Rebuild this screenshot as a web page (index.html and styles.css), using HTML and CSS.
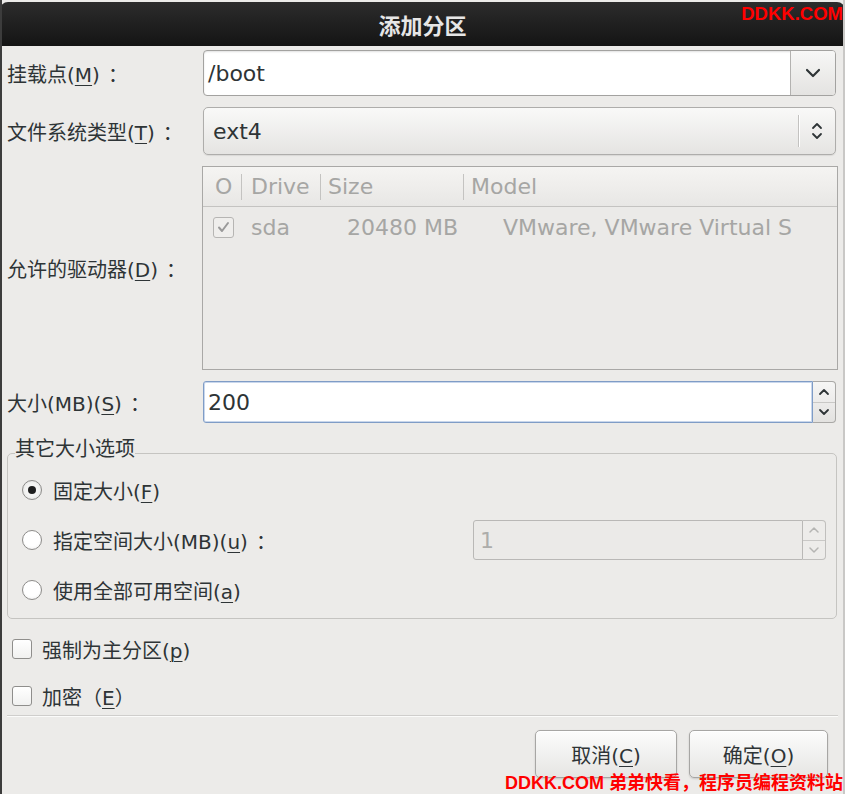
FILE: index.html
```html
<!DOCTYPE html>
<html lang="zh-CN">
<head>
<meta charset="utf-8">
<title>添加分区</title>
<link rel="stylesheet" href="styles.css">
</head>
<body>
<div class="dialog">
  <div class="titlebar">添加分区</div>
  <div class="content">
    <div class="form">
      <label class="lbl">挂载点(<u>M</u>)<span class="colon">：</span></label>
      <div class="combo-entry">
        <div class="ce-text">/boot</div>
        <div class="ce-btn">
          <svg width="16" height="10" viewBox="0 0 16 10"><path d="M2 2 L8 8 L14 2" fill="none" stroke="#2e3436" stroke-width="2.2" stroke-linecap="round" stroke-linejoin="round"/></svg>
        </div>
      </div>

      <label class="lbl">文件系统类型(<u>T</u>)<span class="colon">：</span></label>
      <div class="combo">
        <div class="combo-text">ext4</div>
        <div class="combo-sep"></div>
        <div class="combo-arrows">
          <svg width="12" height="22" viewBox="0 0 12 22"><path d="M2 8 L6 4 L10 8 M2 14 L6 18 L10 14" fill="none" stroke="#2e3436" stroke-width="1.8" stroke-linecap="round" stroke-linejoin="round"/></svg>
        </div>
      </div>

      <label class="lbl">允许的驱动器(<u>D</u>)<span class="colon">：</span></label>
      <div class="table">
        <div class="thead">
          <div class="th c0">O</div>
          <div class="th c1">Drive</div>
          <div class="th c2">Size</div>
          <div class="th c3">Model</div>
        </div>
        <div class="trow">
          <div class="td c0">
            <span class="tcheck"><svg width="15" height="15" viewBox="0 0 15 15"><path d="M3 7.5 L6 11 L12 3" fill="none" stroke="#9a9a9a" stroke-width="2" stroke-linecap="round" stroke-linejoin="round"/></svg></span>
          </div>
          <div class="td c1">sda</div>
          <div class="td c2">20480 MB</div>
          <div class="td c3">VMware, VMware Virtual S</div>
        </div>
      </div>

      <label class="lbl">大小(MB)(<u>S</u>)<span class="colon">：</span></label>
      <div class="spin focus">
        <div class="spin-entry">200</div>
        <div class="spin-btns">
          <div class="sb up"><svg width="12" height="8" viewBox="0 0 12 8"><path d="M2 6 L6 2 L10 6" fill="none" stroke="#2e3436" stroke-width="1.8" stroke-linecap="round" stroke-linejoin="round"/></svg></div>
          <div class="sb down"><svg width="12" height="8" viewBox="0 0 12 8"><path d="M2 2 L6 6 L10 2" fill="none" stroke="#2e3436" stroke-width="1.8" stroke-linecap="round" stroke-linejoin="round"/></svg></div>
        </div>
      </div>
    </div>

    <fieldset class="frame">
      <legend>其它大小选项</legend>
      <div class="opt first">
        <span class="radio checked"><span class="dot"></span></span>
        <span class="opt-text">固定大小(<u>F</u>)</span>
      </div>
      <div class="opt">
        <span class="radio"></span>
        <span class="opt-text">指定空间大小(MB)(<u>u</u>)<span class="colon">：</span></span>
        <div class="spin disabled">
          <div class="spin-entry">1</div>
          <div class="spin-btns">
            <div class="sb up"><svg width="12" height="8" viewBox="0 0 12 8"><path d="M2 6 L6 2 L10 6" fill="none" stroke="#b5b5b3" stroke-width="1.5" stroke-linecap="round" stroke-linejoin="round"/></svg></div>
            <div class="sb down"><svg width="12" height="8" viewBox="0 0 12 8"><path d="M2 2 L6 6 L10 2" fill="none" stroke="#b5b5b3" stroke-width="1.5" stroke-linecap="round" stroke-linejoin="round"/></svg></div>
          </div>
        </div>
      </div>
      <div class="opt">
        <span class="radio"></span>
        <span class="opt-text">使用全部可用空间(<u>a</u>)</span>
      </div>
    </fieldset>

    <div class="check-row first">
      <span class="cbox"></span>
      <span class="opt-text">强制为主分区(<u>p</u>)</span>
    </div>
    <div class="check-row">
      <span class="cbox"></span>
      <span class="opt-text">加密（<u>E</u>）</span>
    </div>

    <div class="separator"></div>

    <div class="buttons">
      <button class="btn cancel">取消(<u>C</u>)</button>
      <button class="btn ok">确定(<u>O</u>)</button>
    </div>
  </div>

  <div class="wm wm-top">DDKK.COM</div>
  <div class="wm wm-bottom">DDKK.COM 弟弟快看，程序员编程资料站</div>
</div>
</body>
</html>
```

FILE: styles.css
```css
* { box-sizing: border-box; }

html, body {
  margin: 0;
  padding: 0;
  background: #ecebe9;
}

body {
  font-family: "DejaVu Sans", "Noto Sans CJK SC", sans-serif;
  color: #2e3436;
  font-size: 20px;
}

.dialog {
  position: relative;
  width: 845px;
  height: 794px;
  background: #ecebe9;
  border-left: 2px solid #3c3c3c;
  border-right: 2px solid #c9c8c6;
  overflow: hidden;
}

.titlebar {
  height: 44px;
  margin-top: 2px;
  margin-left: -2px;
  margin-right: -2px;
  border-radius: 8px 8px 0 0;
  background: linear-gradient(#2c2c2c, #141414);
  color: #e6e6e6;
  font-weight: bold;
  font-size: 22px;
  display: flex;
  align-items: center;
  justify-content: center;
}

.content {
  padding: 4px 7px 0 5px;
}

.form {
  display: grid;
  grid-template-columns: 196px 1fr;
  row-gap: 11px;
  align-items: center;
}

.lbl {
  font-size: 20px;
  white-space: nowrap;
}

.colon { padding-left: 8px; }

u { text-decoration-thickness: 1px; text-underline-offset: 3px; }

/* combo with entry */
.combo-entry {
  height: 46px;
  display: flex;
  border: 1px solid #a3a2a0;
  border-radius: 4px;
  background: #fff;
  overflow: hidden;
  box-shadow: inset 0 1px 2px rgba(0,0,0,0.12);
}
.ce-text {
  flex: 1;
  font-size: 22px;
  padding-left: 4px;
  display: flex;
  align-items: center;
}
.ce-btn {
  width: 45px;
  border-left: 1px solid #b3b2b0;
  background: linear-gradient(#f7f7f6, #e4e3e1);
  display: flex;
  align-items: center;
  justify-content: center;
}

/* combo button */
.combo {
  height: 48px;
  display: flex;
  align-items: center;
  border: 1px solid #aeadab;
  border-radius: 5px;
  background: linear-gradient(#f9f9f8, #e5e4e2);
  box-shadow: 0 1px 1px rgba(0,0,0,0.08);
}
.combo-text {
  flex: 1;
  font-size: 22px;
  padding-left: 9px;
}
.combo-sep {
  width: 1px;
  height: 32px;
  background: #c3c2c0;
  box-shadow: 1px 0 0 #fff;
}
.combo-arrows {
  width: 36px;
  display: flex;
  justify-content: center;
  align-items: center;
}

/* table */
.table {
  height: 204px;
  margin-left: -1px;
  margin-right: -2px;
  border: 1px solid #a9a8a6;
  background: #ebeae8;
  color: #a6a6a4;
  font-size: 22px;
}
.thead, .trow {
  display: grid;
  grid-template-columns: 38px 79px 143px 1fr;
  height: 40px;
  align-items: center;
}
.thead {
  background: linear-gradient(#f5f4f2, #e8e7e5);
  border-bottom: 1px solid #c4c3c1;
}
.th {
  height: 26px;
  line-height: 26px;
  padding-left: 9px;
  border-left: 1px solid #c4c3c1;
}
.th.c0 { border-left: none; padding-left: 12px; }
.th.c2 { padding-left: 7px; }
.th.c3 { padding-left: 7px; }
.td { white-space: nowrap; }
.td.c0 { padding-left: 10px; display: flex; align-items: center; }
.td.c1 { padding-left: 10px; }
.td.c2 { text-align: right; padding-right: 5px; }
.td.c3 { padding-left: 40px; }
.tcheck {
  width: 21px;
  height: 21px;
  border: 1px solid #b6b5b3;
  border-radius: 3px;
  background: #efeeec;
  display: flex;
  align-items: center;
  justify-content: center;
}

/* spin button */
.spin {
  display: flex;
  height: 42px;
}
.spin-entry {
  flex: 1;
  font-size: 22px;
  display: flex;
  align-items: center;
  padding-left: 4px;
  background: #fff;
  border: 1px solid #7f9cc6;
  border-radius: 3px 0 0 3px;
  box-shadow: inset 0 0 0 1px #c9d7ec;
}
.spin-btns {
  width: 23px;
  display: flex;
  flex-direction: column;
  border: 1px solid #a9a8a6;
  border-left: none;
  border-radius: 0 4px 4px 0;
  overflow: hidden;
  background: linear-gradient(#f6f6f5, #e3e2e0);
}
.sb {
  flex: 1;
  display: flex;
  align-items: center;
  justify-content: center;
}
.sb.up { border-bottom: 1px solid #c9c8c6; }

.spin.disabled {
  height: 40px;
  width: 353px;
  margin-left: auto;
}
.spin.disabled .spin-entry {
  background: #ebeae8;
  border-color: #b9b8b6;
  box-shadow: none;
  color: #adadab;
  padding-left: 6px;
}
.spin.disabled .spin-btns {
  border-color: #c0bfbd;
  background: #edecea;
}

/* frame */
.frame {
  margin: 15px -1px 0 0;
  padding: 0 10px 3px 14px;
  border: 1px solid #c5c4c1;
  border-radius: 5px;
  min-width: 0;
}
.frame legend {
  padding: 0 0 8px 0;
  margin-left: -7px;
  font-size: 20px;
  line-height: 22px;
}
.opt {
  height: 50px;
  display: flex;
  align-items: center;
}
.opt.first { margin-top: -3px; }
.radio {
  width: 20px;
  height: 20px;
  border-radius: 50%;
  border: 1px solid #8c8b89;
  background: radial-gradient(circle at 50% 40%, #ffffff 55%, #ebebea);
  display: flex;
  align-items: center;
  justify-content: center;
  flex: none;
}
.radio.checked {
  background: radial-gradient(circle, #f4f4f3 50%, #dcdcdb);
}
.radio .dot {
  width: 8px;
  height: 8px;
  border-radius: 50%;
  background: #1e1e1e;
}
.opt-text {
  margin-left: 11px;
  font-size: 20px;
  white-space: nowrap;
}

/* checkboxes */
.check-row {
  height: 30px;
  display: flex;
  align-items: center;
  padding-left: 5px;
  margin-top: 17px;
}
.check-row.first { margin-top: 15px; }
.cbox {
  width: 20px;
  height: 20px;
  border: 1px solid #8f8e8c;
  border-radius: 3px;
  background: linear-gradient(#ffffff, #f1f1f0);
  flex: none;
}
.check-row .opt-text { margin-left: 10px; }

.separator {
  margin: 4px -2px 0 0;
  height: 2px;
  border-top: 1px solid #cfcecc;
  border-bottom: 1px solid #fbfbfa;
}

.buttons {
  display: flex;
  justify-content: flex-end;
  gap: 12px;
  margin-top: 13px;
  padding-right: 8px;
}
.btn {
  height: 48px;
  font-family: "DejaVu Sans", "Noto Sans CJK SC", sans-serif;
  font-size: 20px;
  color: #2e3436;
  border: 1px solid #a7a6a4;
  border-radius: 5px;
  background: linear-gradient(#fcfcfc, #e6e5e3);
  box-shadow: 0 1px 2px rgba(0,0,0,0.15), inset 0 1px 0 #fff;
  padding: 0;
}
.btn.cancel { width: 142px; }
.btn.ok { width: 139px; }

/* watermarks */
.wm {
  position: absolute;
  color: #ff0000;
  font-family: "Liberation Sans", "Noto Sans CJK SC", sans-serif;
  font-weight: bold;
  line-height: 20px;
  white-space: nowrap;
}
.wm-top { top: 4px; right: 0; font-size: 18.5px; }
.wm-bottom { bottom: 1px; right: 0; font-size: 18px; }
```
